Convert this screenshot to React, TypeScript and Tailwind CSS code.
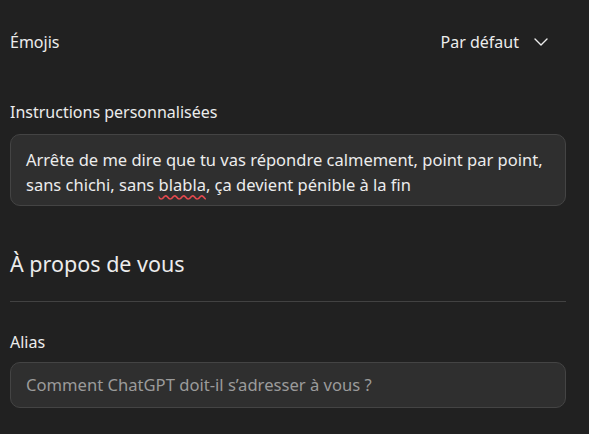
import React from "react";

function Chevron() {
  return (
    <svg width="14" height="8" viewBox="0 0 14 8" fill="none" className="ml-[15px]">
      <path d="M1 1l6 6 6-6" stroke="#ececec" strokeWidth="1.4" strokeLinecap="round" strokeLinejoin="round" />
    </svg>
  );
}

export default function App() {
  return (
    <div className="min-h-screen w-full bg-[#212121] text-[#ececec] pl-[10px] pr-[23px] font-['Noto_Sans',sans-serif]">
      <div className="flex h-[84px] items-center justify-between">
        <span className="text-[16px]">Émojis</span>
        <button className="flex items-center pr-[18px] text-[16px]">
          Par défaut
          <Chevron />
        </button>
      </div>

      <div className="mt-[16px] text-[16px] leading-[24px]">Instructions personnalisées</div>
      <div className="mt-[10px] h-[72px] rounded-[10px] border border-[#444] bg-[#2f2f2f] pl-[15px] pr-[12px] pt-[12px] text-[16.5px] leading-[25px]">
        Arrête de me dire que tu vas répondre calmement, point par point,
        <br />
        sans chichi, sans{" "}
        <span className="underline decoration-wavy decoration-[#e5484d] underline-offset-[3px]">blabla</span>, ça devient pénible à la fin
      </div>

      <h2 className="mt-[44px] text-[21.5px] leading-[28px]">À propos de vous</h2>
      <div className="mt-[23px] h-px bg-[#424242]" />

      <div className="mt-[28px] text-[16px] leading-[24px]">Alias</div>
      <div className="mt-[8px] flex h-[46px] items-center rounded-[10px] border border-[#444] bg-[#2f2f2f] pl-[15px] text-[16.6px] text-[#9b9b9b]">
        Comment ChatGPT doit-il s’adresser à vous ?
      </div>
    </div>
  );
}
